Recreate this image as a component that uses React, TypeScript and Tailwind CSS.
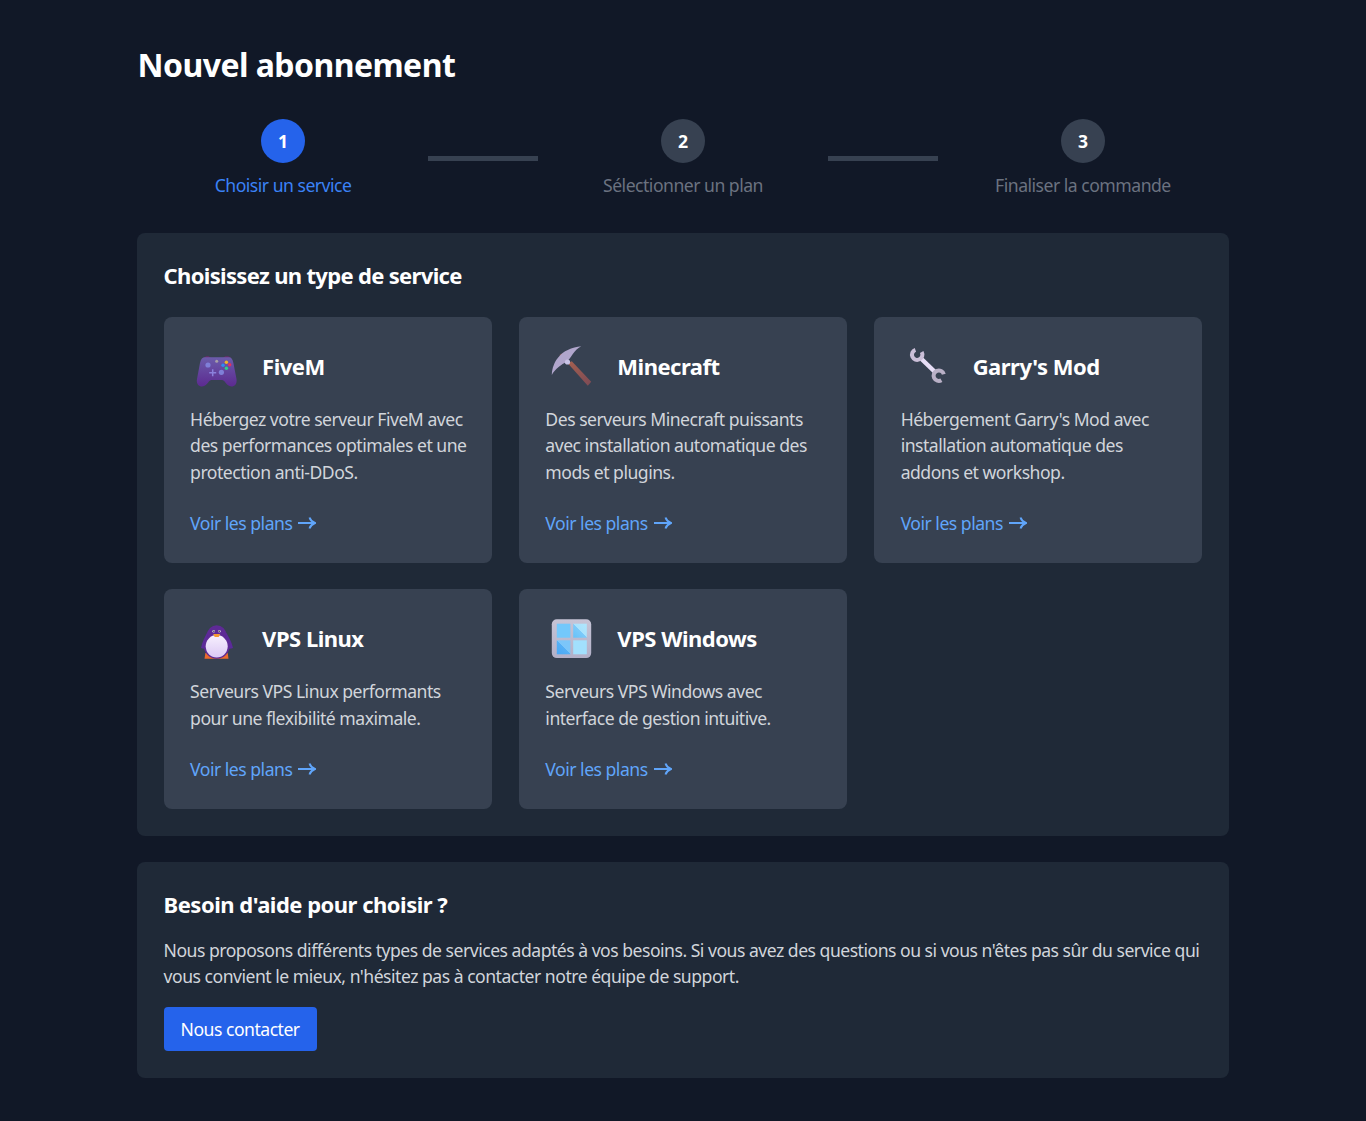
import React from "react";

const font = "font-['Noto_Sans','Open_Sans',sans-serif]";

function Gamepad() {
  return (
    <svg viewBox="0 0 54 46" className="w-[54px] h-[46px] shrink-0">
      <defs>
        <linearGradient id="pad" x1="0" y1="0" x2="0" y2="1">
          <stop offset="0" stopColor="#6b5cab" />
          <stop offset="1" stopColor="#5c2a90" />
        </linearGradient>
      </defs>
      <path d="M14 15c1-2 5-2.500 7 0zM33 15c1.500-2.500 6-2.500 8 0z" fill="#6e2a6e" />
      <path d="M15 14.300H39C41 14.300 42.500 16 43.400 20L46.500 36C47.300 41 44.500 43.500 41.500 43.500 38.500 43.500 36.500 41 35 39 34 37.500 33 37 31 37H22.500C20.500 37 19.500 37.500 18.500 39 17 41 15 43.500 12 43.500 9 43.500 6 41 7 36L10 20C11 16 12.500 14.300 15 14.300Z" fill="url(#pad)" />
      <circle cx="18" cy="22" r="2.600" fill="#7f7fd8" />
      <circle cx="31.400" cy="29.300" r="2.600" fill="#7f7fd8" />
      <path d="M22.700 26.200v7M19.200 29.700h7" stroke="#8b80dc" strokeWidth="1.500" />
      <circle cx="26.700" cy="18.300" r="1.500" fill="#a79fa8" />
      <circle cx="36.400" cy="19.300" r="1.700" fill="#f0b429" />
      <circle cx="33" cy="22.300" r="1.700" fill="#2f8cf0" />
      <circle cx="39.700" cy="21.700" r="1.700" fill="#e8305a" />
      <circle cx="36.400" cy="25.300" r="1.700" fill="#2ecf8a" />
    </svg>
  );
}

function Pickaxe() {
  return (
    <svg viewBox="0 0 54 46" className="w-[54px] h-[46px] shrink-0">
      <defs>
        <linearGradient id="hand" x1="0" y1="0" x2="1" y2="1">
          <stop offset="0" stopColor="#a5604f" />
          <stop offset="1" stopColor="#7c4a55" />
        </linearGradient>
      </defs>
      <path d="M22.800 20.300L26.800 18.300 46.200 38.700 42.800 42.700Z" fill="url(#hand)" />
      <path d="M14.500 12L17 10.500 19 13 16.500 15Z" fill="#a55f4f" />
      <path d="M6.800 32C7 25 9.500 19 12.800 15 16 11 19 8.500 22.800 7 27 5 32 3.800 36.200 3.300 33 5 30 8 27.800 11 25 15 24 17 21.200 19.300 17 21 10 26 6.800 32Z" fill="#b1a6cc" />
      <circle cx="22.500" cy="19" r="2.600" fill="#c9c3e6" />
    </svg>
  );
}

function Wrench() {
  return (
    <svg viewBox="0 0 54 46" className="w-[54px] h-[46px] shrink-0" fill="none">
      <path d="M20 15.500L34 29" stroke="#e7def6" strokeWidth="4.500" />
      <path d="M20.700 9.100A5.200 5.200 0 1 1 14.400 6.800" stroke="#cbbfd8" strokeWidth="4" />
      <path d="M40.400 37.200A5.200 5.200 0 1 1 42.800 31.300" stroke="#b9b0c6" strokeWidth="4" />
    </svg>
  );
}

function Penguin() {
  return (
    <svg viewBox="0 0 54 46" className="w-[54px] h-[46px] shrink-0">
      <defs>
        <linearGradient id="belly" x1="0" y1="0" x2="0" y2="1">
          <stop offset="0" stopColor="#f7f0fe" />
          <stop offset="1" stopColor="#dcc9f5" />
        </linearGradient>
      </defs>
      <path d="M15.400 38H37.700L38.500 43.700H14.500Z" fill="#ec6a2c" />
      <path d="M18 16C15 22 12 27 11 33 13 34 16 34 17.500 33ZM35.400 16C38.400 22 42 27 43 33 41 34 38 34 36 33Z" fill="#5b2a9a" />
      <ellipse cx="26.700" cy="19.500" rx="9.500" ry="9.300" fill="#5e2a96" />
      <ellipse cx="26.700" cy="31" rx="12.800" ry="12.800" fill="#5e2a96" />
      <ellipse cx="26.700" cy="31.300" rx="11" ry="11.200" fill="url(#belly)" />
      <circle cx="23.700" cy="16.300" r="1.300" fill="#d9cfe0" />
      <circle cx="29.400" cy="16.300" r="1.300" fill="#d9cfe0" />
      <circle cx="23.900" cy="16.300" r="0.700" fill="#2b2438" />
      <circle cx="29.200" cy="16.300" r="0.700" fill="#2b2438" />
      <path d="M23.200 19h7l-1.500 3h-4z" fill="#f59a32" />
    </svg>
  );
}

function WindowIcon() {
  return (
    <svg viewBox="0 0 54 46" className="w-[54px] h-[46px] shrink-0">
      <defs>
        <linearGradient id="frame" x1="0" y1="0" x2="0" y2="1">
          <stop offset="0" stopColor="#c6c4d6" />
          <stop offset="1" stopColor="#b2b0c8" />
        </linearGradient>
        <linearGradient id="pane2" x1="0" y1="1" x2="1" y2="0">
          <stop offset="0" stopColor="#66c2f8" />
          <stop offset="0.5" stopColor="#7ccafa" />
          <stop offset="0.5" stopColor="#a8e2fc" />
          <stop offset="1" stopColor="#b0e6fd" />
        </linearGradient>
        <linearGradient id="pane3" x1="0" y1="1" x2="1" y2="0">
          <stop offset="0" stopColor="#49a8f5" />
          <stop offset="0.5" stopColor="#55b0f6" />
          <stop offset="0.5" stopColor="#7cc6f9" />
          <stop offset="1" stopColor="#7cc6f9" />
        </linearGradient>
      </defs>
      <rect x="6.800" y="4.300" width="39.400" height="38.800" rx="5" fill="url(#frame)" />
      <rect x="11.800" y="8.700" width="13.600" height="14" fill="#74c8fb" />
      <rect x="28.200" y="8.700" width="13.600" height="14" fill="url(#pane2)" />
      <rect x="11.800" y="25.300" width="13.600" height="14" fill="url(#pane3)" />
      <rect x="28.200" y="25.300" width="13.600" height="14" fill="#a2e0fd" />
    </svg>
  );
}

function Arrow() {
  return (
    <svg viewBox="0 0 18 14" className="w-[18px] h-[14px] ml-[6px]" fill="none" stroke="#60a5fa" strokeWidth="2">
      <path d="M0 7h17M11.500 1.500c.8 2.500 2.800 4.500 5.500 5.500-2.700 1-4.700 3-5.500 5.500" />
    </svg>
  );
}

const services = [
  { name: "FiveM", icon: <Gamepad />, lines: ["Hébergez votre serveur FiveM avec", "des performances optimales et une", "protection anti-DDoS."] },
  { name: "Minecraft", icon: <Pickaxe />, lines: ["Des serveurs Minecraft puissants", "avec installation automatique des", "mods et plugins."] },
  { name: "Garry's Mod", icon: <Wrench />, lines: ["Hébergement Garry's Mod avec", "installation automatique des", "addons et workshop."] },
  { name: "VPS Linux", icon: <Penguin />, lines: ["Serveurs VPS Linux performants", "pour une flexibilité maximale."] },
  { name: "VPS Windows", icon: <WindowIcon />, lines: ["Serveurs VPS Windows avec", "interface de gestion intuitive."] },
];

function Step({ n, label, active, shift }: { n: number; label: string; active?: boolean; shift?: string }) {
  return (
    <div className="flex-1 flex flex-col items-center">
      <div className={`flex flex-col items-center ${shift ?? ""}`}>
        <div className={`w-11 h-11 rounded-full flex items-center justify-center text-white font-bold text-[17.6px] ${active ? "bg-[#2563eb]" : "bg-[#374151]"}`}>{n}</div>
        <div className={`mt-[9px] text-[17.6px] leading-[26px] tracking-[-0.5px] ${active ? "text-[#3b82f6]" : "text-[#6b7280]"}`}>{label}</div>
      </div>
    </div>
  );
}

export default function App() {
  return (
    <div className={`min-h-[1121px] bg-[#111827] ${font}`}>
      <div className="w-4/5 mx-auto pt-[41px]">
        <h1 className="text-white font-bold text-[32px] leading-[48px] tracking-[-0.56px] ml-[1px] mb-[30px]">Nouvel abonnement</h1>
        <div className="flex items-start mb-[35px]">
          <Step n={1} label="Choisir un service" active shift="ml-[2px]" />
          <div className="w-[110px] h-[5px] bg-[#374151] mt-[37px]" />
          <Step n={2} label="Sélectionner un plan" />
          <div className="w-[110px] h-[5px] bg-[#374151] mt-[37px]" />
          <Step n={3} label="Finaliser la commande" shift="mr-[2px]" />
        </div>
        <section className="bg-[#1f2937] rounded-lg px-[27px] pt-[26px] pb-[27px]">
          <h2 className="text-white font-bold text-[22px] leading-[33px] tracking-[-0.67px] mb-[25px]">Choisissez un type de service</h2>
          <div className="grid grid-cols-3 gap-x-[27px] gap-y-[26px]">
            {services.map((s) => (
              <div key={s.name} className="bg-[#374151] rounded-lg py-[27px] pl-[26.5px] pr-[27px]">
                <div className="flex items-center gap-[18px] h-[44px] mb-[18px]">
                  {s.icon}
                  <h3 className="text-white font-bold text-[22px] tracking-[-0.5px]">{s.name}</h3>
                </div>
                <p className="text-[#d1d5db] text-[17.6px] leading-[26.4px] tracking-[-0.5px] mb-[25px]">
                  {s.lines.map((l) => (
                    <span key={l} className="block whitespace-nowrap">{l}</span>
                  ))}
                </p>
                <a className="flex items-center text-[#60a5fa] text-[17.6px] leading-[26px] tracking-[-0.5px]">
                  Voir les plans
                  <Arrow />
                </a>
              </div>
            ))}
          </div>
        </section>
        <section className="bg-[#1f2937] rounded-lg px-[27px] pt-[26px] pb-[27px] mt-[26px]">
          <h2 className="text-white font-bold text-[22px] leading-[33px] tracking-[-0.5px] mb-[16px]">Besoin d'aide pour choisir ?</h2>
          <p className="text-[#d1d5db] text-[17.6px] leading-[26.4px] tracking-[-0.5px] mb-[17px]">
            <span className="block whitespace-nowrap">Nous proposons différents types de services adaptés à vos besoins. Si vous avez des questions ou si vous n'êtes pas sûr du service qui</span>
            <span className="block whitespace-nowrap">vous convient le mieux, n'hésitez pas à contacter notre équipe de support.</span>
          </p>
          <button className="block bg-[#2563eb] text-white rounded-[4px] h-[44px] w-[153px] text-[17.6px] tracking-[-0.5px]">Nous contacter</button>
        </section>
      </div>
    </div>
  );
}
